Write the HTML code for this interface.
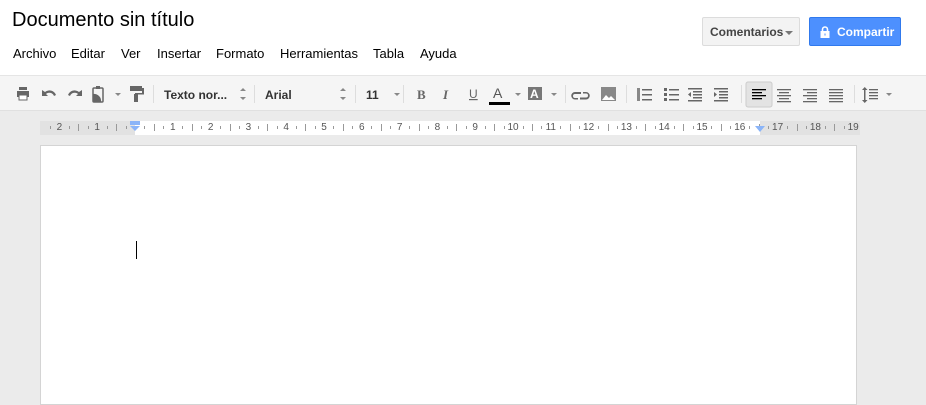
<!DOCTYPE html>
<html><head><meta charset="utf-8"><style>
*{margin:0;padding:0;box-sizing:border-box}
body{width:926px;height:400px;overflow:hidden;background:#ebebeb;font-family:"Liberation Sans",Arial,sans-serif;position:relative}
.hdr{position:absolute;left:0;top:0;width:926px;height:75px;background:#fff}
.title{position:absolute;left:12px;top:9px;font-size:20px;color:#000}
.menu span{position:absolute;top:46px;font-size:13px;color:#000}
.btn1{position:absolute;left:702px;top:17px;width:98px;height:29px;border:1px solid #dcdcdc;border-radius:2px;background:#f3f3f3;font-size:12px;font-weight:bold;color:#444;padding:7px 0 0 7px}
.btn1 i{position:absolute;right:6px;top:13px;border:4px solid transparent;border-top-color:#777;border-bottom:0}
.btn2{position:absolute;left:809px;top:17px;width:92px;height:29px;border:1px solid #3079ed;border-radius:2px;background:#4d90fe;font-size:12px;font-weight:bold;color:#fff;padding:7px 0 0 27px}
.tb{position:absolute;left:0;top:75px;width:926px;height:36px;background:#f5f5f5;border-top:1px solid #e5e5e5;border-bottom:1px solid #e0e0e0}
.ti{position:absolute;top:0}
.sep{position:absolute;top:9px;width:1px;height:18px;background:#ddd}
.lbl{position:absolute;top:12px;font-size:12px;font-weight:bold;color:#333}
.dd{position:absolute;top:17px;border:3px solid transparent;border-top-color:#888;border-bottom:0}
.ruler{position:absolute;left:40px;top:121px;width:820px;height:14px;background:#e2e2e2}
.rw{position:absolute;left:135px;top:121px;width:625px;height:14px;background:#fff}
.rn{position:absolute;top:122px;font-size:10px;color:#555;width:20px;text-align:center;margin-left:-10px}
.tk{position:absolute;width:1px;background:#999}
.page{position:absolute;left:40px;top:145px;width:817px;height:260px;background:#fff;border:1px solid #d4d4d4}
.cur{position:absolute;left:136px;top:241px;width:1px;height:18px;background:#000}
</style></head><body>
<div class="hdr">
<div class="title">Documento sin título</div>
<div class="menu"><span style="left:13px">Archivo</span><span style="left:71px">Editar</span><span style="left:121px">Ver</span><span style="left:157px">Insertar</span><span style="left:216px">Formato</span><span style="left:280px">Herramientas</span><span style="left:373px">Tabla</span><span style="left:420px">Ayuda</span></div>
<div class="btn1">Comentarios<i></i></div>
<div class="btn2"><svg style="position:absolute;left:10px;top:8px" width="10" height="12" viewBox="0 0 10 12"><path d="M2.5 5V3.5a2.5 2.5 0 0 1 5 0V5" stroke="#fff" stroke-width="1.6" fill="none"/><rect x="0.5" y="5" width="9" height="7" fill="#fff"/><rect x="4.5" y="7.5" width="1" height="2" fill="#4d90fe"/></svg>Compartir</div>
</div>
<div class="tb">
<svg class="ti" width="926" height="36" viewBox="0 0 926 36">
<g fill="#666">
<rect x="17" y="15" width="12" height="6"/><rect x="19" y="11" width="8" height="3"/><rect x="19" y="19" width="8" height="5" fill="#fff" stroke="#666"/>
<path d="M42 14v6h6l-2-2a5 5 0 0 1 8 2l2-1a7 7 0 0 0-11-3z"/>
<path d="M82 14v6h-6l2-2a5 5 0 0 0-8 2l-2-1a7 7 0 0 1 11-3z"/>
<rect x="93" y="12" width="10" height="14" rx="1" fill="none" stroke="#666" stroke-width="1.5"/><path d="M93 18a7 7 0 0 1 8 8h-8z"/><rect x="96" y="10" width="4" height="3"/>
<rect x="130" y="10" width="12" height="5"/><rect x="142" y="12" width="2" height="6"/><rect x="135" y="17" width="9" height="1.5"/><rect x="134" y="18" width="4" height="8"/>
<path d="M240 15l3-3 3 3zM240 21l3 3 3-3z" fill="#888"/>
<path d="M340 15l3-3 3 3zM340 21l3 3 3-3z" fill="#888"/>
<text x="417" y="23" font-family="Liberation Serif" font-weight="bold" font-size="13" fill="#666">B</text>
<text x="443" y="23" font-family="Liberation Serif" font-style="italic" font-weight="bold" font-size="13" fill="#666">I</text>
<text x="469" y="22" font-family="Liberation Sans" font-size="12" fill="#666" text-decoration="underline">U</text>
<text x="493" y="22" font-family="Liberation Sans" font-size="14" fill="#555">A</text>
<rect x="489" y="26" width="21" height="3" fill="#000"/>
<rect x="528" y="11" width="14" height="13" fill="#777"/><text x="530" y="22" font-family="Liberation Sans" font-weight="bold" font-size="12" fill="#fff">A</text>
<path d="M575 16h6v2h-6a2 2 0 0 0 0 4h3v1.5h-3a3.5 3.5 0 0 1 0-7.5zM586 16h-3v1.5h3a2 2 0 0 1 0 4h-6v2h6a3.5 3.5 0 0 0 0-7.5z"/>
<rect x="601" y="11" width="15" height="14" fill="#888"/><path d="M602 24l4-5 3 3 2-2 4 4z" fill="#fff"/>
<g transform="translate(637,12)"><rect x="5" y="1" width="10" height="1.5"/><rect x="5" y="6" width="10" height="1.5"/><rect x="5" y="11" width="10" height="1.5"/><rect x="0" y="0" width="3" height="13" fill="#888"/></g>
<g transform="translate(664,12)"><rect x="5" y="1" width="10" height="1.5"/><rect x="5" y="6" width="10" height="1.5"/><rect x="5" y="11" width="10" height="1.5"/><rect x="0" y="0" width="3" height="3"/><rect x="0" y="5" width="3" height="3"/><rect x="0" y="10" width="3" height="3"/></g>
<g transform="translate(688,12)"><rect x="0" y="0" width="14" height="1.5"/><rect x="5" y="3" width="9" height="1.5"/><rect x="5" y="6" width="9" height="1.5"/><rect x="5" y="9" width="9" height="1.5"/><rect x="0" y="12" width="14" height="1.5"/><path d="M3 4v5l-3-2.5z"/></g>
<g transform="translate(714,12)"><rect x="0" y="0" width="14" height="1.5"/><rect x="5" y="3" width="9" height="1.5"/><rect x="5" y="6" width="9" height="1.5"/><rect x="5" y="9" width="9" height="1.5"/><rect x="0" y="12" width="14" height="1.5"/><path d="M0 4v5l3-2.5z"/></g>
<rect x="746" y="6" width="26" height="25" rx="2" fill="#e3e3e3" stroke="#ccc"/>
<g transform="translate(752,13)" fill="#000"><rect width="14" height="1.3"/><rect y="3" width="10" height="1.3"/><rect y="6" width="14" height="1.3"/><rect y="9" width="10" height="1.3"/></g>
<g transform="translate(777,13)"><rect width="14" height="1.3"/><rect x="2" y="3" width="10" height="1.3"/><rect y="6" width="14" height="1.3"/><rect x="2" y="9" width="10" height="1.3"/><rect y="12" width="14" height="1.3"/></g>
<g transform="translate(803,13)"><rect width="14" height="1.3"/><rect x="4" y="3" width="10" height="1.3"/><rect y="6" width="14" height="1.3"/><rect x="4" y="9" width="10" height="1.3"/><rect y="12" width="14" height="1.3"/></g>
<g transform="translate(829,13)"><rect width="14" height="1.3"/><rect y="3" width="14" height="1.3"/><rect y="6" width="14" height="1.3"/><rect y="9" width="14" height="1.3"/><rect y="12" width="14" height="1.3"/></g>
<g transform="translate(862,11)"><rect x="2" y="2" width="1.5" height="12"/><path d="M0 3l2.75-3 2.75 3zM0 13l2.75 3 2.75-3z"/><rect x="7" y="2" width="9" height="1.3"/><rect x="7" y="5" width="9" height="1.3"/><rect x="7" y="8" width="9" height="1.3"/><rect x="7" y="11" width="9" height="1.3"/></g>
</g>
</svg>
<div class="dd" style="left:115px"></div>
<div class="sep" style="left:153px"></div>
<div class="lbl" style="left:164px">Texto nor...</div>
<div class="sep" style="left:254px"></div>
<div class="lbl" style="left:265px">Arial</div>
<div class="sep" style="left:355px"></div>
<div class="lbl" style="left:366px">11</div>
<div class="dd" style="left:394px"></div>
<div class="sep" style="left:403px"></div>
<div class="dd" style="left:515px"></div>
<div class="dd" style="left:551px"></div>
<div class="sep" style="left:565px"></div>
<div class="sep" style="left:626px"></div>
<div class="sep" style="left:741px"></div>
<div class="sep" style="left:854px"></div>
<div class="dd" style="left:886px"></div>
</div>
<div class="ruler"></div><div class="rw"></div>
<div id="r"></div>
<svg style="position:absolute;left:129px;top:121px" width="12" height="12"><rect x="1" y="0" width="10" height="4" fill="#8ab4f8"/><path d="M1 5h10l-5 5z" fill="#8ab4f8"/></svg>
<svg style="position:absolute;left:754px;top:126px" width="12" height="8"><path d="M1 0h10l-5 6z" fill="#8ab4f8"/></svg>
<div class="page"></div>
<div class="cur"></div>
<script>
var h='';
for(var n=-2;n<=19;n++){if(n==0)continue;var x=135+37.8*n;if(x>862)break;h+='<div class="rn" style="left:'+x.toFixed(1)+'px">'+Math.abs(n)+'</div>';}
for(var q=-10;q<=80;q++){var x=135+37.8*q/4;if(x<42||x>858||q%4==0)continue;var tall=q%2==0;h+='<div class="tk" style="left:'+x.toFixed(1)+'px;top:'+(tall?124:126)+'px;height:'+(tall?7:3)+'px"></div>';}
document.getElementById('r').innerHTML=h;
</script>
</body></html>
